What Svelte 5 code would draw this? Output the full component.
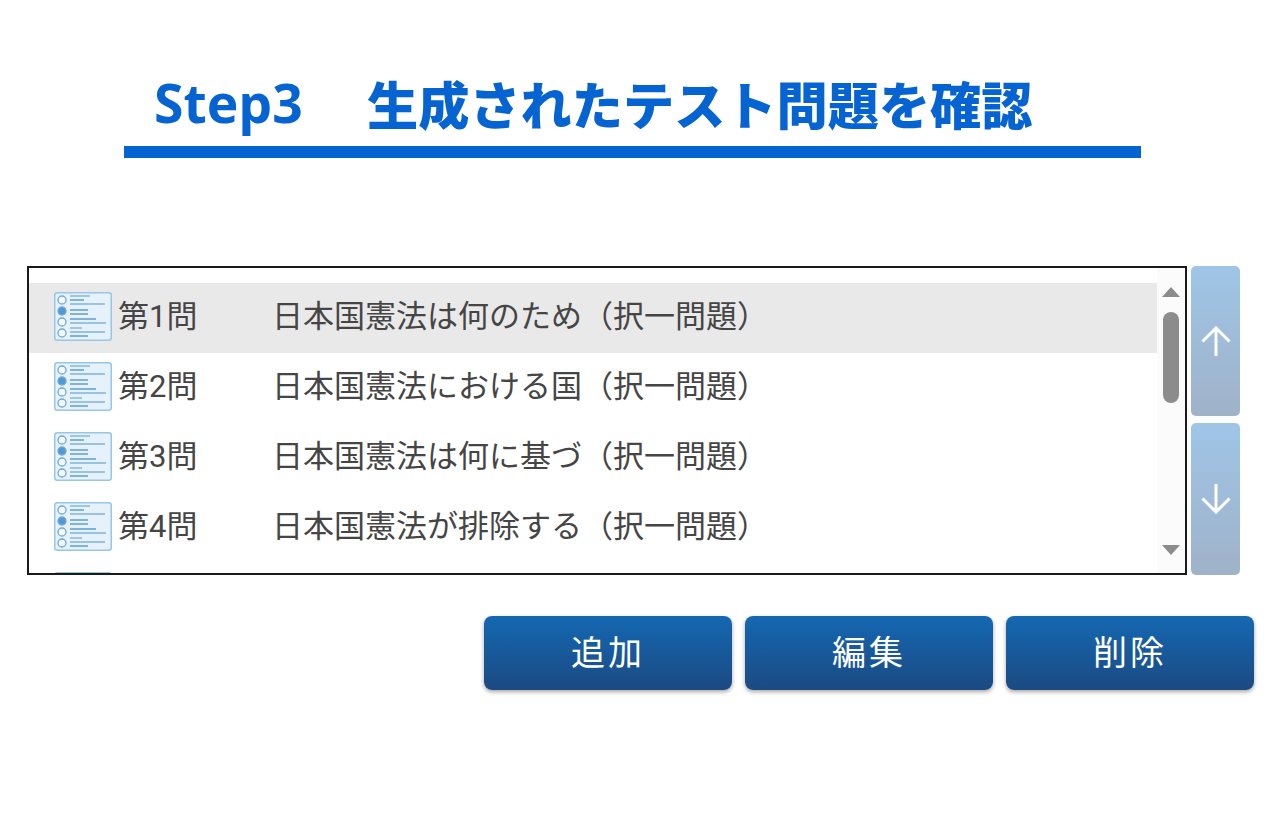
<script>
  const rows = [
    { no: "第1問", title: "日本国憲法は何のため（択一問題）", selected: true },
    { no: "第2問", title: "日本国憲法における国（択一問題）" },
    { no: "第3問", title: "日本国憲法は何に基づ（択一問題）" },
    { no: "第4問", title: "日本国憲法が排除する（択一問題）" },
    { no: "", title: "" }
  ]
  const circles = [8, 19, 30, 41]
  const lines = [
    [16, 4, 36, 1.4], [16, 8, 30, 2], [16, 12, 51, 1.4],
    [16, 18, 34, 2], [16, 22, 34, 2], [16, 27, 42, 2],
    [16, 31, 52, 1.4], [16, 36, 28, 1.4], [16, 40, 51, 1.4], [16, 44, 34, 2]
  ]
</script>

<main>
  <h1 class="title"><span class="step">Step3</span><span class="text">生成されたテスト問題を確認</span></h1>

  <section class="picker">
    <div class="list">
      <div class="rows">
        {#each rows as r}
          <div class="row" class:selected={r.selected}>
            <svg class="qicon" width="58" height="49" viewBox="0 0 58 49">
              <rect x="0.75" y="0.75" width="56.5" height="47.5" rx="2.5" fill="#e6f2fb" stroke="#98c6e6" stroke-width="1.5"/>
              {#each circles as cy, i}
                <circle cx="8" {cy} r="4" fill={i == 1 ? "#4f9ad4" : "#f4f9fd"} stroke="#6fa9d6" stroke-width="1.3"/>
              {/each}
              {#each lines as [x1, y, x2, w]}
                <line {x1} y1={y} {x2} y2={y} stroke="#7fb3dc" stroke-width={w}/>
              {/each}
            </svg>
            <span class="no">{r.no}</span>
            <span class="name">{r.title}</span>
          </div>
        {/each}
      </div>
      <div class="scrollbar">
        <svg width="20" height="10" viewBox="0 0 20 10"><path d="M10 0 L19 10 L1 10 Z" fill="#8c8c8c"/></svg>
        <div class="thumb"></div>
        <div class="spacer"></div>
        <svg width="20" height="10" viewBox="0 0 20 10"><path d="M1 0 L19 0 L10 10 Z" fill="#8c8c8c"/></svg>
      </div>
    </div>
    <div class="side">
      <button class="move up" aria-label="上へ">
        <svg width="30" height="30" viewBox="0 0 30 30" fill="none" stroke="#fff" stroke-width="3"><path d="M15 30 V2 M1.5 15.5 L15 2 L28.5 15.5"/></svg>
      </button>
      <button class="move down" aria-label="下へ">
        <svg width="30" height="30" viewBox="0 0 30 30" fill="none" stroke="#fff" stroke-width="3"><path d="M15 0 V28 M1.5 14.5 L15 28 L28.5 14.5"/></svg>
      </button>
    </div>
  </section>

  <div class="actions">
    <button>追加</button>
    <button>編集</button>
    <button>削除</button>
  </div>
</main>

<style>
  :global(body) {
    background: #fff;
  }
  main {
    width: 1280px;
    height: 814px;
    padding-top: 68px;
    box-sizing: border-box;
    font-family: "Noto Sans CJK JP", "Noto Sans", sans-serif;
    overflow: hidden;
  }
  .title {
    margin: 0 0 108px 124px;
    width: 1017px;
    height: 90px;
    box-sizing: border-box;
    padding-left: 30px;
    border-bottom: 12px solid #0564d2;
    color: #0564d2;
    font-family: "Open Sans", "Noto Sans CJK JP", sans-serif;
    font-weight: 700;
    display: flex;
    align-items: flex-start;
    white-space: nowrap;
  }
  .step {
    width: 213px;
    font-size: 53.5px;
    line-height: 70px;
  }
  .text {
    font-size: 51.2px;
    line-height: 70px;
    font-family: "Noto Sans CJK JP", sans-serif;
    font-weight: 900;
  }
  .picker {
    margin-left: 27px;
    display: flex;
    gap: 4px;
    height: 309px;
  }
  .list {
    width: 1160px;
    box-sizing: border-box;
    border: 2px solid #1a1a1a;
    display: flex;
    overflow: hidden;
  }
  .rows {
    flex: 1;
    padding-top: 15px;
    min-width: 0;
  }
  .row {
    height: 70px;
    flex: none;
    display: flex;
    align-items: flex-start;
    padding-left: 25px;
    color: #454545;
    font-size: 31px;
    line-height: 62px;
    white-space: nowrap;
  }
  .row.selected {
    background: #e9e9e9;
  }
  .qicon {
    flex: none;
    margin-top: 9px;
  }
  .no {
    width: 156px;
    margin: 3px 0 0 6px;
    font-family: "Roboto", "Noto Sans CJK JP", sans-serif;
  }
  .name {
    margin-left: -2px;
  }
  .scrollbar {
    width: 28px;
    flex: none;
    background: #fbfbfb;
    display: flex;
    flex-direction: column;
    align-items: center;
    padding: 19px 1px 18px 0;
    box-sizing: border-box;
  }
  .thumb {
    width: 16px;
    height: 91px;
    margin-top: 15px;
    border-radius: 8px;
    background: #8c8c8c;
  }
  .spacer {
    flex: 1;
  }
  .side {
    width: 49px;
    display: flex;
    flex-direction: column;
    gap: 7px;
  }
  .move {
    border: 0;
    padding: 0;
    border-radius: 5px;
    background: linear-gradient(#9fc5e7, #9fb2c8);
    display: flex;
    align-items: center;
    justify-content: center;
  }
  .move.up {
    height: 150px;
  }
  .move.down {
    height: 152px;
  }
  .actions {
    margin-top: 41px;
    padding-right: 26px;
    display: flex;
    justify-content: flex-end;
    gap: 13px;
  }
  .actions button {
    width: 248px;
    height: 74px;
    border: 0;
    padding: 0 0 6px;
    border-radius: 8px;
    background: linear-gradient(#1468b2, #1c4a82);
    box-shadow: 0 2px 4px rgba(0, 0, 0, 0.35);
    color: #fff;
    font-family: "Noto Sans CJK JP", sans-serif;
    font-size: 34px;
    letter-spacing: 3px;
  }
</style>
